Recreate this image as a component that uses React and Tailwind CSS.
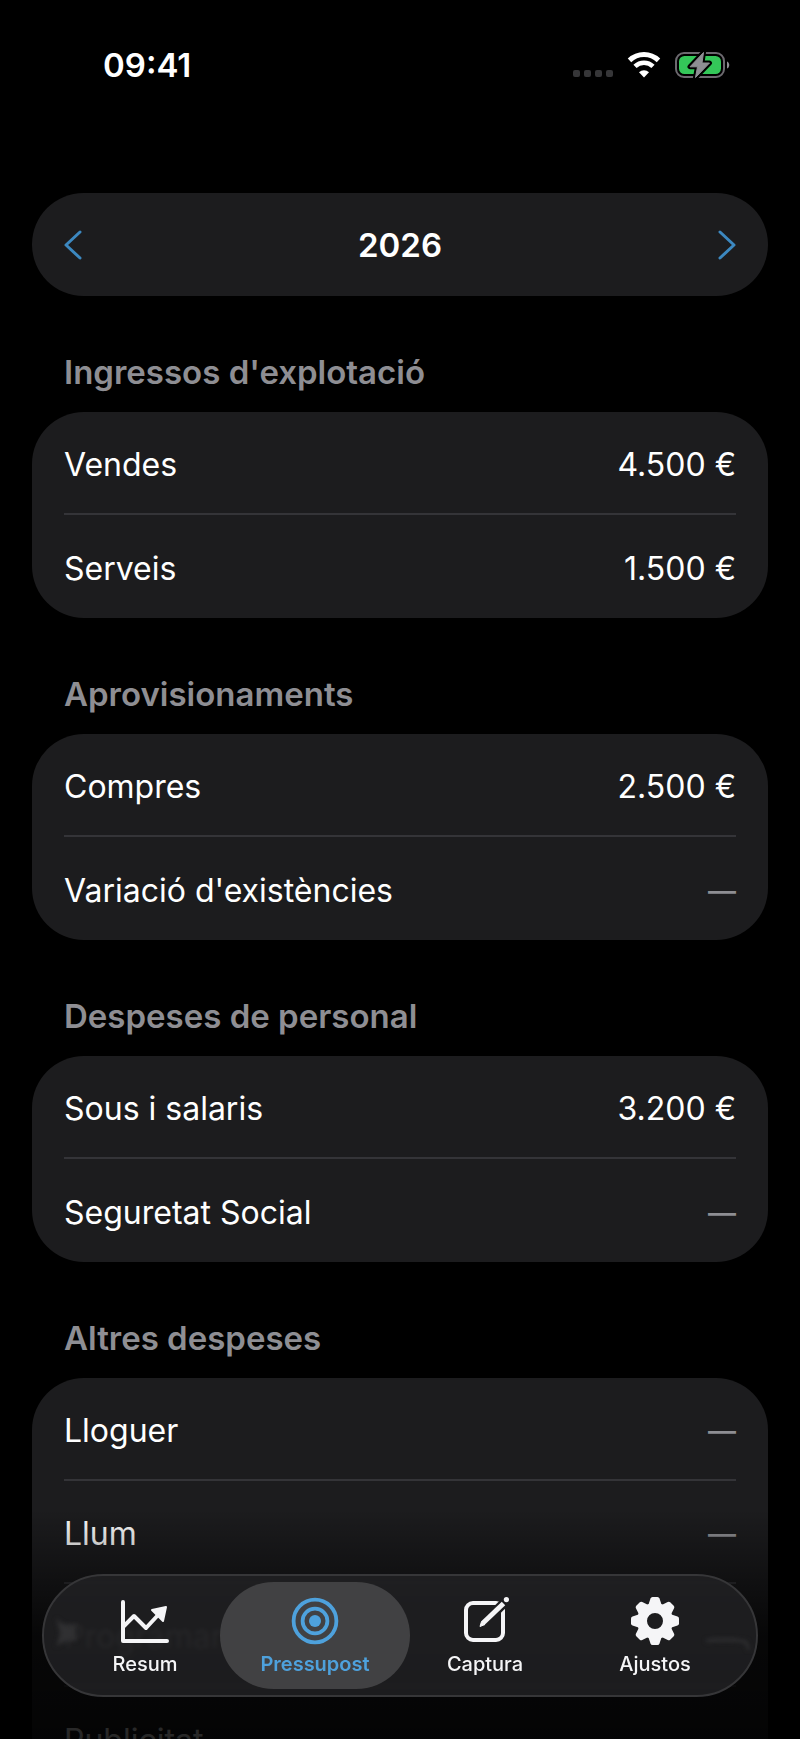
import React, { useState } from "react";

const sections = [
  {
    title: "Ingressos d'explotació",
    rows: [
      { label: "Vendes", amount: 4500 },
      { label: "Serveis", amount: 1500 },
    ],
  },
  {
    title: "Aprovisionaments",
    rows: [
      { label: "Compres", amount: 2500 },
      { label: "Variació d'existències", amount: null },
    ],
  },
  {
    title: "Despeses de personal",
    rows: [
      { label: "Sous i salaris", amount: 3200 },
      { label: "Seguretat Social", amount: null },
    ],
  },
  {
    title: "Altres despeses",
    rows: [
      { label: "Lloguer", amount: null },
      { label: "Llum", amount: null },
      { label: "Programari", amount: null },
      { label: "Publicitat", amount: null },
    ],
  },
];

const formatAmount = (n) => `${String(n).replace(/\B(?=(\d{3})+(?!\d))/g, ".")} €`;

function WifiIcon() {
  return (
    <svg className="h-[26px] w-[34px]" viewBox="0 0 34 26" fill="none" aria-hidden="true">
      <path d="M2.5 8.4a21 21 0 0 1 29 0" stroke="#fff" strokeWidth="5" />
      <path d="M8 14.4a13 13 0 0 1 18 0" stroke="#fff" strokeWidth="4.6" />
      <path d="M17 25.5l-5-5.2a7.2 7.2 0 0 1 10 0z" fill="#fff" />
    </svg>
  );
}

function BatteryIcon() {
  return (
    <svg className="h-[28px] w-[55px]" viewBox="0 0 55 28" fill="none" aria-hidden="true">
      <rect x="1" y="2" width="48" height="24" rx="8" stroke="#6d6a70" strokeWidth="2" />
      <path d="M52 10.5c3 1 3 6 0 7z" fill="#8e8e93" />
      <rect x="4" y="5" width="42" height="18" rx="5.5" fill="#34c759" />
      <path d="M28.5 1.5L15 15.8h7.5l-2 10.7 14-14.5H27z" fill="#000" stroke="#000" strokeWidth="5" strokeLinejoin="round" />
      <path d="M28.5 1.5L15 15.8h7.5l-2 10.7 14-14.5H27z" fill="#8e8e93" stroke="#8e8e93" strokeLinejoin="round" />
    </svg>
  );
}

function Chevron({ flip }) {
  return (
    <svg className="h-[30px] w-[18px]" viewBox="0 0 18 30" fill="none" aria-hidden="true">
      <path d={flip ? "M2 2l14 13L2 28" : "M16 2L2 15l14 13"} stroke="#3c88c0" strokeWidth="3" strokeLinecap="round" strokeLinejoin="round" />
    </svg>
  );
}

function ChartIcon() {
  return (
    <svg className="h-12 w-12" viewBox="0 0 48 48" fill="none" stroke="currentColor" strokeLinecap="round" strokeLinejoin="round" aria-hidden="true">
      <path d="M2 5v39h44" strokeWidth="4" />
      <path d="M2 30l11-11 12 12 13-14" strokeWidth="4" />
      <path d="M45 10l-14 3 11 11z" fill="currentColor" strokeWidth="2" />
    </svg>
  );
}

function TargetIcon() {
  return (
    <svg className="h-12 w-12" viewBox="0 0 48 48" fill="none" stroke="currentColor" strokeWidth="3.8" aria-hidden="true">
      <circle cx="24" cy="24" r="21.4" />
      <circle cx="24" cy="24" r="12.4" />
      <circle cx="24" cy="24" r="6" fill="currentColor" stroke="none" />
    </svg>
  );
}

function ComposeIcon() {
  return (
    <svg className="h-12 w-12" viewBox="0 0 48 48" fill="none" stroke="currentColor" aria-hidden="true">
      <mask id="pencil-gap" maskUnits="userSpaceOnUse" x="0" y="0" width="50" height="50">
        <rect width="50" height="50" fill="#fff" stroke="none" />
        <path d="M48 1L21 28" stroke="#000" strokeWidth="9.5" />
      </mask>
      <rect x="5" y="6" width="37" height="37" rx="7" strokeWidth="4" mask="url(#pencil-gap)" />
      <path d="M42.5 6.500L22 26" strokeWidth="5" />
      <path d="M20.5 24.500L19 29.500 24 27.500z" fill="currentColor" strokeWidth="1" strokeLinejoin="round" />
      <circle cx="45.4" cy="2.6" r="2.6" fill="currentColor" stroke="none" />
    </svg>
  );
}

const TEETH = [0, 45, 90, 135, 180, 225, 270, 315];

function GearIcon() {
  return (
    <svg className="h-12 w-12" viewBox="0 0 48 48" fill="currentColor" aria-hidden="true">
      <circle cx="24" cy="24" r="13" fill="none" stroke="currentColor" strokeWidth="10" />
      {TEETH.map((a) => (
        <path key={a} d="M17 9l2.5-7.5Q20 0 21.5 0h5q1.500 0 2 1.500L31 9z" transform={`rotate(${a} 24 24)`} />
      ))}
    </svg>
  );
}

const tabs = [
  { id: "resum", label: "Resum", Icon: ChartIcon },
  { id: "pressupost", label: "Pressupost", Icon: TargetIcon },
  { id: "captura", label: "Captura", Icon: ComposeIcon },
  { id: "ajustos", label: "Ajustos", Icon: GearIcon },
];

function StatusBar() {
  return (
    <header className="flex h-[130px] items-center justify-between pl-[103px] pr-[70px]">
      <span className="text-[33px] leading-10 font-semibold">09:41</span>
      <div className="flex items-center">
        <div className="mr-[14px] flex gap-1 pt-4">
          {[0, 1, 2, 3].map((i) => (
            <span key={i} className="size-[7px] rounded-xs bg-[#363638]" />
          ))}
        </div>
        <WifiIcon />
        <span className="w-[14px]" />
        <BatteryIcon />
      </div>
    </header>
  );
}

function Section({ title, rows }) {
  return (
    <section>
      <h2 className="flex h-[116px] items-end px-8 pb-5 text-[33px] leading-10 font-semibold text-[#8e8e93]">{title}</h2>
      <ul className="rounded-[52px] bg-[#1c1c1e] px-8">
        {rows.map((row) => (
          <li key={row.label} className="flex h-[103px] items-center justify-between border-b-2 border-[#343438] pt-1 text-[32px] leading-10 last:border-b-0">
            <span>{row.label}</span>
            {row.amount === null ? (
              <span className="text-[28px] font-medium text-[#8e8e93]">—</span>
            ) : (
              <span>{formatAmount(row.amount)}</span>
            )}
          </li>
        ))}
      </ul>
    </section>
  );
}

export default function App() {
  const [year, setYear] = useState(2026);
  const [active, setActive] = useState("pressupost");

  return (
    <div className="relative h-screen overflow-hidden bg-black font-['Inter',sans-serif] text-white">
      <StatusBar />

      <main className="px-8 pt-[63px]">
        <div className="flex h-[103px] items-center justify-between rounded-full bg-[#1c1c1e] px-8">
          <button type="button" aria-label="Any anterior" onClick={() => setYear(year - 1)}>
            <Chevron />
          </button>
          <h1 className="text-[33px] leading-10 font-semibold">{year}</h1>
          <button type="button" aria-label="Any següent" onClick={() => setYear(year + 1)}>
            <Chevron flip />
          </button>
        </div>

        {sections.map((s) => (
          <Section key={s.title} title={s.title} rows={s.rows} />
        ))}
      </main>

      {/* content fades out under the floating bar */}
      <div className="pointer-events-none absolute inset-x-0 bottom-0 h-[230px] bg-linear-to-b from-transparent via-black/75 via-55% to-black/85" />

      <nav className="absolute inset-x-[42px] bottom-[42px] flex rounded-full border-2 border-[#363638] bg-[#212123]/85 px-4 py-1.5 backdrop-blur-[2px]">
        {/* light bent by the glass at both ends of the bar */}
        <svg className="pointer-events-none absolute left-2 top-10 h-10 w-8 blur-[2px]" viewBox="0 0 32 40" fill="#303032" aria-hidden="true">
          <path d="M4 2c5 6 12 8 20 7v16c-8-1-14 1-20 6l4-14z" />
        </svg>
        <svg className="pointer-events-none absolute right-1 top-14 h-6 w-12 blur-[2px]" viewBox="0 0 48 24" fill="none" stroke="#303032" strokeWidth="3" aria-hidden="true">
          <path d="M2 9c16-2 34-1 40 1l3 8" />
        </svg>
        {tabs.map(({ id, label, Icon }) => (
          <div key={id} className="flex-1">
            <button
              type="button"
              onClick={() => setActive(id)}
              className={`relative -mx-[10px] flex h-[107px] w-[calc(100%+20px)] flex-col items-center rounded-full pt-[15px] ${
                active === id ? "bg-[#414143] text-[#4ea1dc]" : "text-[#f5f5f7]"
              }`}
            >
              <Icon />
              <span className={`mt-[7px] text-[20px] leading-6 ${active === id ? "font-semibold" : "font-medium"}`}>{label}</span>
            </button>
          </div>
        ))}
      </nav>
    </div>
  );
}
